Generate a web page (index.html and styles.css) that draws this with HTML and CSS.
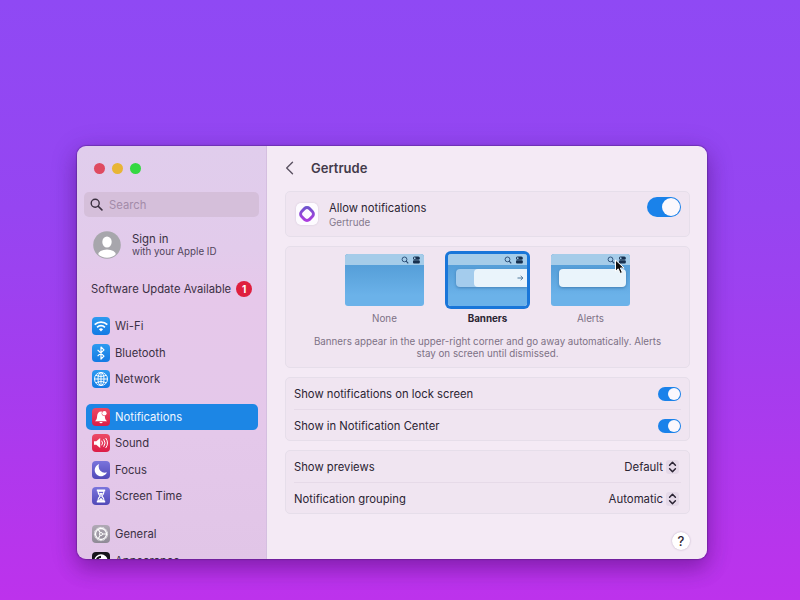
FILE: index.html
```html
<!DOCTYPE html>
<html lang="en">
<head>
<meta charset="utf-8">
<title>Notifications</title>
<link rel="stylesheet" href="styles.css">
</head>
<body>
<svg width="0" height="0" class="defs">
  <defs>
    <linearGradient id="blue" x1="0" y1="0" x2="0" y2="1"><stop offset="0" stop-color="#2d9af0"/><stop offset="1" stop-color="#137ae4"/></linearGradient>
    <linearGradient id="red" x1="0" y1="0" x2="0" y2="1"><stop offset="0" stop-color="#ec4a66"/><stop offset="1" stop-color="#dc1c46"/></linearGradient>
    <linearGradient id="indigo" x1="0" y1="0" x2="0" y2="1"><stop offset="0" stop-color="#7a74dc"/><stop offset="1" stop-color="#5149b8"/></linearGradient>
    <linearGradient id="gray" x1="0" y1="0" x2="0" y2="1"><stop offset="0" stop-color="#b0a9b5"/><stop offset="1" stop-color="#8f8a96"/></linearGradient>
    <linearGradient id="ring" x1="0" y1="0" x2="1" y2="1"><stop offset="0" stop-color="#6b56cc"/><stop offset="1" stop-color="#b13ae0"/></linearGradient>
    <symbol id="menu-icons" viewBox="0 0 20 8">
      <circle cx="3.5" cy="3.4" r="2.4" fill="none" stroke="#25466f" stroke-width=".9"/>
      <path d="M5.2 5.1l2 2.2" stroke="#25466f" stroke-width="1.1"/>
      <rect x="12" y=".6" width="6.8" height="3.2" rx="1.5" fill="#17304f"/>
      <rect x="12" y="4.2" width="6.8" height="3.2" rx="1" fill="#17304f"/>
      <circle cx="13.7" cy="2.2" r=".9" fill="#9cc4e4"/>
    </symbol>
    <symbol id="updown" viewBox="0 0 13 14">
      <path d="M3.6 5.3l2.9-3 2.9 3M3.6 8.7l2.9 3 2.9-3" fill="none" stroke="#2b2433" stroke-width="1.5" stroke-linecap="round" stroke-linejoin="round"/>
    </symbol>
  </defs>
</svg>
<main class="window">
  <aside class="sidebar">
    <div class="lights"><i class="light close"></i><i class="light minimize"></i><i class="light expand"></i></div>
    <div class="search">
      <svg width="13" height="13" viewBox="0 0 13 13"><circle cx="5.2" cy="5.2" r="4" fill="none" stroke="#3b3040" stroke-width="1.4"/><path d="M8.2 8.2l3.7 3.7" stroke="#3b3040" stroke-width="1.6" stroke-linecap="round"/></svg>
      <span>Search</span>
    </div>
    <div class="account">
      <svg width="28" height="28" viewBox="0 0 28 28"><defs><clipPath id="face"><circle cx="14" cy="14" r="12.8"/></clipPath></defs><circle cx="14" cy="14" r="13.8" fill="#a7a6ac"/><g clip-path="url(#face)" fill="#fff"><ellipse cx="14" cy="11" rx="4.7" ry="5.5"/><ellipse cx="14" cy="24" rx="9" ry="5.6"/></g></svg>
      <div><div class="sign">Sign in</div><div class="sub">with your Apple ID</div></div>
    </div>
    <div class="update"><span>Software Update Available</span><b class="badge">1</b></div>
    <nav>
      <div class="group">
        <div class="item"><svg viewBox="0 0 18 18"><rect width="18" height="18" rx="4" fill="url(#blue)"/><g fill="none" stroke="#fff" stroke-width="1.7"><path d="M2.7 7.7a8.9 8.9 0 0 1 12.6 0M5.1 10.3a5.5 5.5 0 0 1 7.8 0"/></g><path d="M9 14.6l-2.1-2.3a3 3 0 0 1 4.2 0z" fill="#fff"/></svg><span>Wi-Fi</span></div>
        <div class="item"><svg viewBox="0 0 18 18"><rect width="18" height="18" rx="4" fill="url(#blue)"/><path d="M5.6 5.9l6.4 6.2-3 2.9V3l3 2.9-6.4 6.2" fill="none" stroke="#fff" stroke-width="1.2" stroke-linejoin="round"/></svg><span>Bluetooth</span></div>
        <div class="item"><svg viewBox="0 0 18 18"><rect width="18" height="18" rx="4" fill="url(#blue)"/><g fill="none" stroke="#fff" stroke-width=".95"><circle cx="9" cy="9" r="6.5"/><ellipse cx="9" cy="9" rx="3" ry="6.5"/><path d="M9 2.5v13M2.5 9h13M3.8 5.2c3 1.7 7.4 1.7 10.4 0M3.8 12.8c3-1.7 7.4-1.7 10.4 0"/></g></svg><span>Network</span></div>
      </div>
      <div class="group">
        <div class="item active"><svg viewBox="0 0 18 18"><rect width="18" height="18" rx="4" fill="url(#red)"/><path d="M3 13.2c1.5-1.2 1.9-2.5 2.1-5C5.3 5.3 6.8 3.6 9 3.6s3.6 1.7 3.8 4.6c.2 2.5.7 3.8 2.2 5z" fill="#fff"/><path d="M7.3 14.1h3.4a1.8 1.8 0 0 1-3.4 0z" fill="#fff"/><circle cx="12.4" cy="5.3" r="2.7" fill="#e53c5b"/><circle cx="12.4" cy="5.3" r="2.2" fill="#fff"/></svg><span>Notifications</span></div>
        <div class="item"><svg viewBox="0 0 18 18"><rect width="18" height="18" rx="4" fill="url(#red)"/><path d="M2 7.2h2.3L8.2 4v10l-3.9-3.2H2z" fill="#fff"/><path d="M9.9 7a3.3 3.3 0 0 1 0 4M11.9 5.6a5.6 5.6 0 0 1 0 6.8M13.9 4.3a8 8 0 0 1 0 9.4" fill="none" stroke="#fff" stroke-width="1" stroke-linecap="round"/></svg><span>Sound</span></div>
        <div class="item"><svg viewBox="0 0 18 18"><rect width="18" height="18" rx="4" fill="url(#indigo)"/><path d="M7.2 3a6.3 6.3 0 1 0 7.7 8.3A6.2 6.2 0 0 1 7.2 3z" fill="#fff"/></svg><span>Focus</span></div>
        <div class="item"><svg viewBox="0 0 18 18"><rect width="18" height="18" rx="4" fill="url(#indigo)"/><path d="M4.8 2.6h8.4v1.6H4.8zM4.8 13.8h8.4v1.6H4.8z" fill="#fff"/><path d="M6 4.2c0 2.6.8 3.4 2.2 4.8C6.8 10.4 6 11.2 6 13.8h6c0-2.6-.8-3.4-2.2-4.8C11.2 7.6 12 6.8 12 4.2z" fill="none" stroke="#fff" stroke-width="1.2"/><path d="M7 6h4L9 8.7zM6.5 13.5L9 10.8l2.5 2.7z" fill="#fff"/></svg><span>Screen Time</span></div>
      </div>
      <div class="group">
        <div class="item"><svg viewBox="0 0 18 18"><rect width="18" height="18" rx="4" fill="url(#gray)"/><g fill="none" stroke="#fff"><circle cx="9" cy="9" r="6.6" stroke-width="1" stroke-dasharray="1 .5"/><circle cx="9" cy="9" r="5.5" stroke-width="1.3"/><circle cx="9" cy="9" r="1.5" stroke-width="1"/><path d="M10.5 9h4.2M8.2 7.7L6.2 4.2M8.2 10.3l-2 3.5" stroke-width="1.1"/></g></svg><span>General</span></div>
        <div class="item"><svg viewBox="0 0 18 18"><rect width="18" height="18" rx="4" fill="#17141b"/><circle cx="9" cy="9" r="6" fill="none" stroke="#fff" stroke-width="1.4"/><path d="M9 3a6 6 0 0 1 0 12v-3a3 3 0 0 1 0-6z" fill="#fff"/></svg><span>Appearance</span></div>
      </div>
    </nav>
  </aside>
  <section class="content">
    <header><svg width="10" height="14" viewBox="0 0 10 14"><path d="M7.5 1.2L1.7 7l5.8 5.8" fill="none" stroke="#5c5363" stroke-width="1.4" stroke-linecap="round" stroke-linejoin="round"/></svg><h1>Gertrude</h1></header>
    <div class="card allow">
      <svg class="app" width="22" height="22" viewBox="0 0 22 22"><rect width="22" height="22" rx="4.5" fill="#fdfbff"/><rect x="5.4" y="5.4" width="11.2" height="11.2" rx="3.6" transform="rotate(45 11 11)" fill="none" stroke="url(#ring)" stroke-width="2.9"/></svg>
      <div class="allow-text"><div class="label">Allow notifications</div><div class="hint">Gertrude</div></div>
      <i class="switch large"></i>
    </div>
    <div class="card styles">
      <div class="options">
        <div class="option"><div class="thumb"><div class="bar"><svg width="20" height="8"><use href="#menu-icons"/></svg></div></div><span>None</span></div>
        <div class="option selected"><div class="thumb"><div class="bar"><svg width="20" height="8"><use href="#menu-icons"/></svg></div><div class="ghost"><div class="banner"><svg width="7" height="6" viewBox="0 0 7 6"><path d="M.5 3h5.3M3.7 .9L5.9 3 3.7 5.1" fill="none" stroke="#406b90" stroke-width=".9"/></svg></div></div></div><span>Banners</span></div>
        <div class="option"><div class="thumb"><div class="bar"><svg width="20" height="8"><use href="#menu-icons"/></svg></div><div class="alert"></div>
          <svg class="cursor" width="12" height="17" viewBox="0 0 12 17"><path d="M1.5 1v11.3l2.7-2.5 2 4.7 2.2-1-2-4.5h3.7z" fill="#111" stroke="#fff" stroke-width="1" stroke-linejoin="round"/></svg></div><span>Alerts</span></div>
      </div>
      <p>Banners appear in the upper-right corner and go away automatically. Alerts<br>stay on screen until dismissed.</p>
    </div>
    <div class="card rows">
      <div class="row"><span>Show notifications on lock screen</span><i class="switch"></i></div>
      <div class="row"><span>Show in Notification Center</span><i class="switch"></i></div>
    </div>
    <div class="card rows">
      <div class="row"><span>Show previews</span><div class="select">Default<svg width="13" height="14"><use href="#updown"/></svg></div></div>
      <div class="row"><span>Notification grouping</span><div class="select">Automatic<svg width="13" height="14"><use href="#updown"/></svg></div></div>
    </div>
    <div class="help">?</div>
  </section>
</main>
</body>
</html>
```
FILE: styles.css
```css
* { box-sizing: border-box; }
html { height: 100%; }
body {
  margin: 0;
  width: 800px;
  height: 600px;
  overflow: hidden;
  padding: 146px 93px 41px 77px;
  background: linear-gradient(#8f49f4 0, #9645f1 35%, #a43dee 62%, #b735ec 90%, #bd32ec 100%);
  font-family: Inter, "Liberation Sans", sans-serif;
  font-size: 11.25px;
  color: #2b2433;
}
svg { display: block; flex: none; }
.defs { position: absolute; }
.window {
  width: 630px;
  height: 413px;
  display: flex;
  border-radius: 9px;
  overflow: hidden;
  box-shadow: 0 0 1px 1px rgba(70, 30, 110, .4), 0 10px 20px rgba(60, 0, 90, .32), 0 4px 28px rgba(60, 0, 100, .18);
}
.sidebar {
  width: 190px;
  height: 413px;
  flex: none;
  overflow: hidden;
  padding: 17px 8px 0;
  background: linear-gradient(#e0cdec 0, #e2cbeb 25%, #e6c8ea 36%, #e4c8ea 70%, #e1c5e7 100%);
  border-right: 1px solid #d5bfe0;
}
.lights { display: flex; gap: 6.8px; padding-left: 9px; height: 11px; }
.light { width: 11px; height: 11px; border-radius: 50%; }
.close { background: #df4a61; }
.minimize { background: #e8b535; }
.expand { background: #35d842; }
.search {
  width: 175px;
  height: 25px;
  margin-top: 18px;
  margin-left: -1px;
  padding-left: 6px;
  display: flex;
  align-items: center;
  gap: 6px;
  border-radius: 5px;
  background: #d5bfda;
  color: #a38ba9;
}
.account { display: flex; gap: 11px; height: 28px; margin: 14px 0 0 8px; align-items: center; }
.sign { line-height: 13px; color: #3b3044; font-size: 11.4px; }
.sub { font-size: 9.75px; line-height: 12px; color: #51445b; }
.account > div { margin-top: 1px; }
.update { display: flex; align-items: center; gap: 5px; height: 16px; margin: 22px 0 0 6px; color: #3b3044; white-space: nowrap; }
.badge {
  width: 16px;
  height: 16px;
  border-radius: 50%;
  background: #df1f3e;
  color: #fff;
  font-size: 10px;
  line-height: 16px;
  text-align: center;
}
nav { margin-top: 16px; }
.group { margin-bottom: 11.2px; }
.item {
  height: 26.5px;
  width: 172.5px;
  margin-left: .5px;
  padding-left: 6.5px;
  display: flex;
  align-items: center;
  gap: 5px;
  border-radius: 5px;
  color: #3b3044;
}
.item svg { width: 18px; height: 18px; }
.active { background: #1c86e5; color: #f1f7ff; }
.content {
  flex: 1;
  padding: 0 17px 0 18px;
  background: #f4eaf5;
}
header { height: 45px; padding-bottom: 1px; display: flex; align-items: center; gap: 16px; }
h1 { margin: 0; font-size: 13px; font-weight: 600; color: #433a4a; }
.card { width: 405px; margin-bottom: 9px; border: 1px solid #e6deea; border-radius: 5px; background: #f0e5f1; }
.allow { height: 46px; display: flex; padding: 0 8px 0 10px; }
.app { margin-top: 11px; border-radius: 5px; box-shadow: 0 0 2px rgba(90, 70, 110, .2); }
.allow-text { flex: 1; padding: 9px 0 0 11px; }
.label { line-height: 14px; }
.hint { font-size: 9.8px; line-height: 16px; color: #85798d; }
.switch {
  width: 23px;
  height: 14px;
  padding: 1px;
  border-radius: 7px;
  background: #1a82ea;
  display: flex;
  justify-content: flex-end;
}
.switch::after { content: ""; width: 12px; height: 12px; border-radius: 50%; background: #fbf8fd; }
.large { width: 34px; height: 20px; border-radius: 10px; margin-top: 5px; }
.large::after { width: 18px; height: 18px; }
.styles { height: 122px; padding-top: 4px; }
.options { display: flex; justify-content: center; gap: 18px; }
.option { width: 85px; display: flex; flex-direction: column; align-items: center; font-size: 9.8px; color: #7d7185; }
.option > span { line-height: 14px; margin-top: 3px; }
.thumb {
  position: relative;
  width: 79px;
  height: 52px;
  margin: 3px;
  border-radius: 3px;
  background: linear-gradient(#559ed8 20%, #6bb2e9 80%);
}
.bar { height: 11px; padding-right: 3px; display: flex; justify-content: flex-end; align-items: center; border-radius: 3px 3px 0 0; background: #a5cce9; }
.selected > span { font-weight: 700; color: #2b2433; }
.selected .thumb { box-shadow: 0 0 0 3px #1976d9; }
.ghost { width: 71px; height: 18px; margin: 4px 0 0 8px; padding-left: 18px; border-radius: 4px 0 0 4px; background: #a4cced; box-shadow: 0 1px 3px rgba(30, 80, 130, .45); clip-path: inset(-4px 0 -5px -4px); }
.banner { height: 18px; border-radius: 4px 0 0 4px; background: #eaf4fb; display: flex; align-items: center; justify-content: flex-end; padding-right: 3px; }
.alert { width: 67px; height: 18px; margin: 4px 0 0 8px; border-radius: 4px; background: #eaf4fb; box-shadow: 0 1px 3px rgba(30, 80, 130, .5); }
.cursor { position: absolute; left: 63px; top: 5px; }
p { margin: 10px 0 0; text-align: center; font-size: 9.78px; line-height: 12px; color: #7d7185; white-space: nowrap; }
.rows { height: 64px; padding: 0 8px; }
.row { height: 31px; display: flex; align-items: center; justify-content: space-between; }
.row + .row { height: 32px; border-top: 1px solid #e6dae8; }
.select { display: flex; align-items: center; gap: 3px; margin-right: 2px; font-size: 11.4px; }
.select svg { border-radius: 3px; background: #e5d9e8; }
.help {
  width: 18px;
  height: 18px;
  margin: 18px 0 0 387px;
  border-radius: 50%;
  background: #fff;
  box-shadow: 0 0 2px rgba(80, 50, 100, .35);
  text-align: center;
  font-size: 13px;
  line-height: 18px;
  font-weight: 500;
}
```
